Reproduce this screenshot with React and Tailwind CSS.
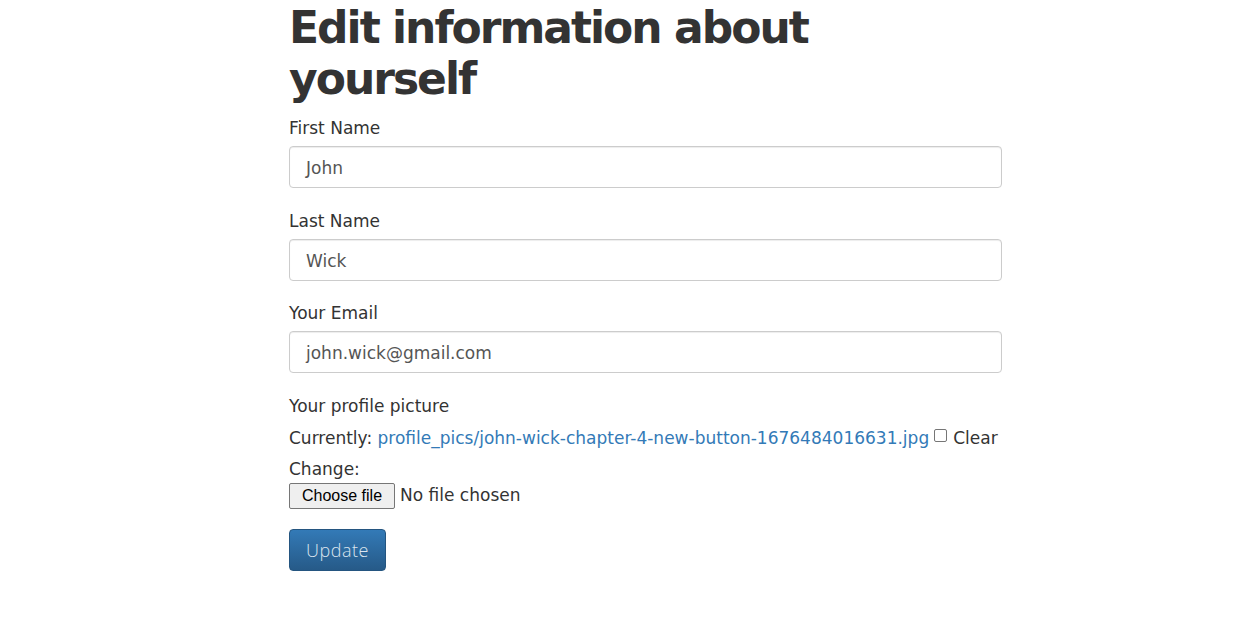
export default function App() {
  const body = { fontFamily: '"DejaVu Sans", "Noto Sans", sans-serif' };
  const Field = ({ label, value, last }) => (
    <div className={last ? "mb-[20px]" : "mb-[21px]"}>
      <label className="block text-[17px] leading-[24px] mb-[6px] text-[#333]">{label}</label>
      <div className="h-[42px] w-full border border-[#ccc] rounded-[4px] bg-white flex items-center px-[16px] pt-[3px] text-[17px] text-[#555] shadow-[inset_0_1px_1px_rgba(0,0,0,0.075)]">
        {value}
      </div>
    </div>
  );
  return (
    <div className="min-h-[632px] bg-white text-[#333]" style={body}>
      <div className="ml-[289px] w-[713px]">
        <h1
          className="text-[44px] leading-[51px] font-bold text-[#333] pt-[2px] mb-[12px] tracking-[-2px]"
          style={{ fontFamily: '"DejaVu Sans", sans-serif' }}
        >
          Edit information about
          <br />
          yourself
        </h1>
        <Field label="First Name" value="John" />
        <Field label="Last Name" value="Wick" last />
        <Field label="Your Email" value="john.wick@gmail.com" />
        <div className="text-[17px] leading-[24px]">Your profile picture</div>
        <div className="text-[17px] leading-[24px] mt-[8px] flex items-center whitespace-nowrap">
          <span>Currently:&nbsp;</span>
          <a className="text-[#337ab7]">profile_pics/john-wick-chapter-4-new-button-1676484016631.jpg</a>
          <span className="inline-block w-[13px] h-[13px] border border-[#767676] rounded-[2px] ml-[5px] mr-[6px] -mt-[6px] bg-white"></span>
          <span>Clear</span>
        </div>
        <div className="text-[17px] leading-[20px] mt-[9px]">Change:</div>
        <div className="flex items-center mt-[4px]">
          <span
            className="h-[26px] px-[12px] border border-[#767676] rounded-[2px] bg-[#efefef] text-[16px] text-black flex items-center"
            style={{ fontFamily: '"Liberation Sans", Arial, sans-serif' }}
          >
            Choose file
          </span>
          <span className="ml-[5px] text-[17px]">No file chosen</span>
        </div>
        <div className="mt-[20px]">
          <span
            className="inline-flex items-center justify-center w-[97px] h-[42px] rounded-[4px] border border-[#245580] bg-gradient-to-b from-[#337ab7] to-[#265a88] text-[#dbe5ef] text-[18px] font-light tracking-[0.5px]"
            style={{ fontFamily: '"Open Sans", sans-serif' }}
          >
            Update
          </span>
        </div>
      </div>
    </div>
  );
}
